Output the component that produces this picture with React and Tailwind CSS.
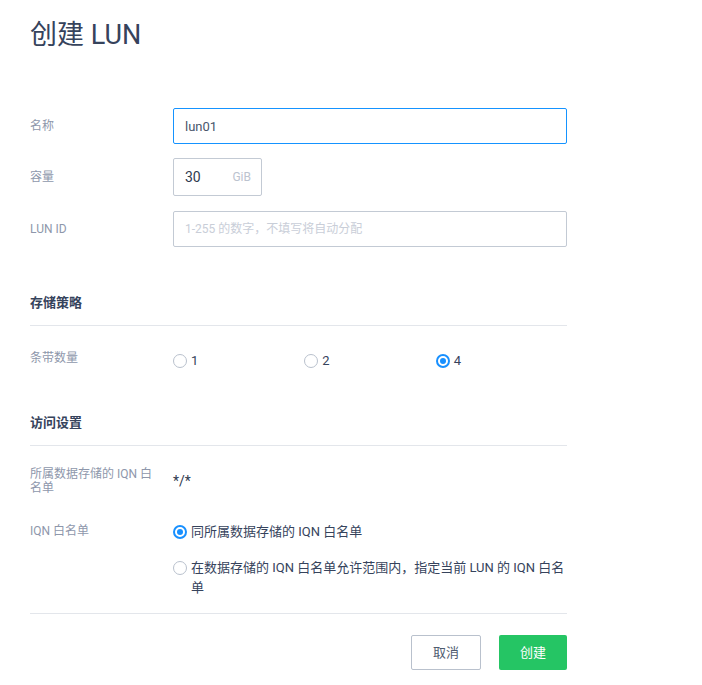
import { useState } from 'react';

function Radio({ checked, onClick, children, className = '' }) {
  return (
    <label onClick={onClick} className={`flex items-start gap-[4px] cursor-pointer ${className}`}>
      <span className="flex h-[20px] items-center shrink-0">
        {checked ? (
          <span className="flex w-[14px] h-[14px] items-center justify-center rounded-full border-[2px] border-[#1890ff] bg-white">
            <span className="w-[6px] h-[6px] rounded-full bg-[#1890ff]" />
          </span>
        ) : (
          <span className="w-[14px] h-[14px] rounded-full border border-[#b9c1cd] bg-white" />
        )}
      </span>
      <span className="text-[13px] leading-[20px] text-[#36435c]">{children}</span>
    </label>
  );
}

function Row({ label, children, className = '', labelClass = '' }) {
  return (
    <div className={`flex ${className}`}>
      <div className={`w-[143px] shrink-0 pr-[20px] text-[12px] text-[#8e97ab] ${labelClass}`}>{label}</div>
      <div className="flex-1 min-w-0">{children}</div>
    </div>
  );
}

function SectionTitle({ children, className = '' }) {
  return (
    <div className={`pb-[12px] border-b border-[#e3e6eb] ${className}`}>
      <h2 className="h-[20px] leading-[20px] text-[13px] font-bold text-[#36435c]">{children}</h2>
    </div>
  );
}

export default function App() {
  const [name, setName] = useState('lun01');
  const [size, setSize] = useState('30');
  const [lunId, setLunId] = useState('');
  const [stripe, setStripe] = useState(4);
  const [iqn, setIqn] = useState('same');

  return (
    <div className="min-h-screen bg-white font-[Roboto,'Noto_Sans_CJK_SC',sans-serif]">
      <div className="w-[537px] ml-[30px] pt-[17px] pb-[15px]">
        <h1 className="h-[36px] leading-[36px] text-[27px] text-[#36435c]">创建 LUN</h1>

        {/* basic fields */}
        <Row label="名称" className="mt-[55px] items-center">
          <input
            value={name}
            onChange={e => setName(e.target.value)}
            className="w-full h-[36px] px-[11px] border border-[#1593ff] rounded-[2px] text-[13px] text-[#4a566c] outline-none"
          />
        </Row>
        <Row label="容量" className="mt-[14px] items-center">
          <div className="flex items-center w-[89px] h-[38px] border border-[#c3cad4] rounded-[2px] pl-[11px] pr-[10px]">
            <input
              value={size}
              onChange={e => setSize(e.target.value)}
              className="w-0 flex-1 text-[14px] text-[#2f3a4f] outline-none"
            />
            <span className="text-[12px] text-[#bcc3cf]">GiB</span>
          </div>
        </Row>
        <Row label="LUN ID" className="mt-[15px] items-center">
          <input
            value={lunId}
            onChange={e => setLunId(e.target.value)}
            placeholder="1-255 的数字，不填写将自动分配"
            className="w-full h-[36px] px-[11px] border border-[#c3cad4] rounded-[2px] text-[12px] text-[#36435c] placeholder:text-[#c9ced8] outline-none"
          />
        </Row>

        {/* storage policy */}
        <SectionTitle className="mt-[46px]">存储策略</SectionTitle>
        <Row label="条带数量" className="mt-[23px] items-start" labelClass="leading-[18px]">
          <div className="grid grid-cols-3 pt-[2px]">
            {[1, 2, 4].map(n => (
              <Radio key={n} checked={stripe === n} onClick={() => setStripe(n)}>{n}</Radio>
            ))}
          </div>
        </Row>

        {/* access */}
        <SectionTitle className="mt-[42px]">访问设置</SectionTitle>
        <Row label="所属数据存储的 IQN 白名单" className="mt-[21px] items-center" labelClass="leading-[14px]">
          <span className="text-[14px] text-[#2f3a4f]">*/*</span>
        </Row>
        <Row label="IQN 白名单" className="mt-[27px]" labelClass="leading-[18px]">
          <div className="flex flex-col gap-[16px]">
            <Radio checked={iqn === 'same'} onClick={() => setIqn('same')}>同所属数据存储的 IQN 白名单</Radio>
            <Radio checked={iqn === 'custom'} onClick={() => setIqn('custom')}>
              在数据存储的 IQN 白名单允许范围内，指定当前 LUN 的 IQN 白名单
            </Radio>
          </div>
        </Row>

        <div className="mt-[15px] h-px bg-[#e3e6eb]" />

        <div className="mt-[21px] flex justify-end gap-[18px]">
          <button className="w-[70px] h-[35px] border border-[#b9c1cd] rounded-[2px] text-[13px] text-[#4f5b70] bg-white">取消</button>
          <button className="w-[68px] h-[35px] rounded-[2px] text-[13px] text-white bg-[#25c564]">创建</button>
        </div>
      </div>
    </div>
  );
}
